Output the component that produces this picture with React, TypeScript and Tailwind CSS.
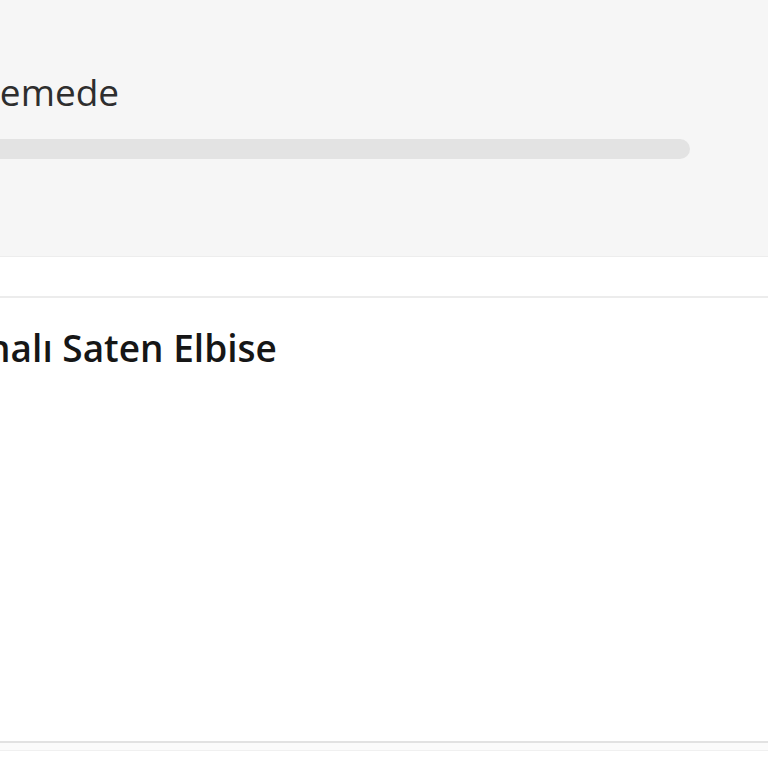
export default function App() {
  return (
    <main
      className="min-h-screen w-full overflow-hidden bg-white"
      style={{ fontFamily: '"Open Sans", "Noto Sans", sans-serif' }}
    >
      {/* status panel */}
      <section className="h-[257px] border-b border-[#ededed] bg-[#f6f6f6] pt-[70px]">
        <div className="-ml-[81px] whitespace-nowrap text-[37px] leading-[44px] text-[#2e2e2e]">
          İncelemede
        </div>
        <div className="mt-[25px] h-[20px] w-[690px] rounded-r-full bg-[#e3e3e3]" />
      </section>

      <div className="h-[41px] border-b-2 border-[#ececec]" />

      {/* product */}
      <section className="h-[445px] border-b-2 border-[#e2e2e2] pt-[28px]">
        <h1 className="-ml-[92px] whitespace-nowrap text-[37px] font-semibold leading-[44px] text-[#161616]">
          Kolonalı Saten Elbise
        </h1>
      </section>
      <div className="h-[8px] border-b border-[#f0f0f0] bg-[#fbfbfb]" />
    </main>
  );
}
